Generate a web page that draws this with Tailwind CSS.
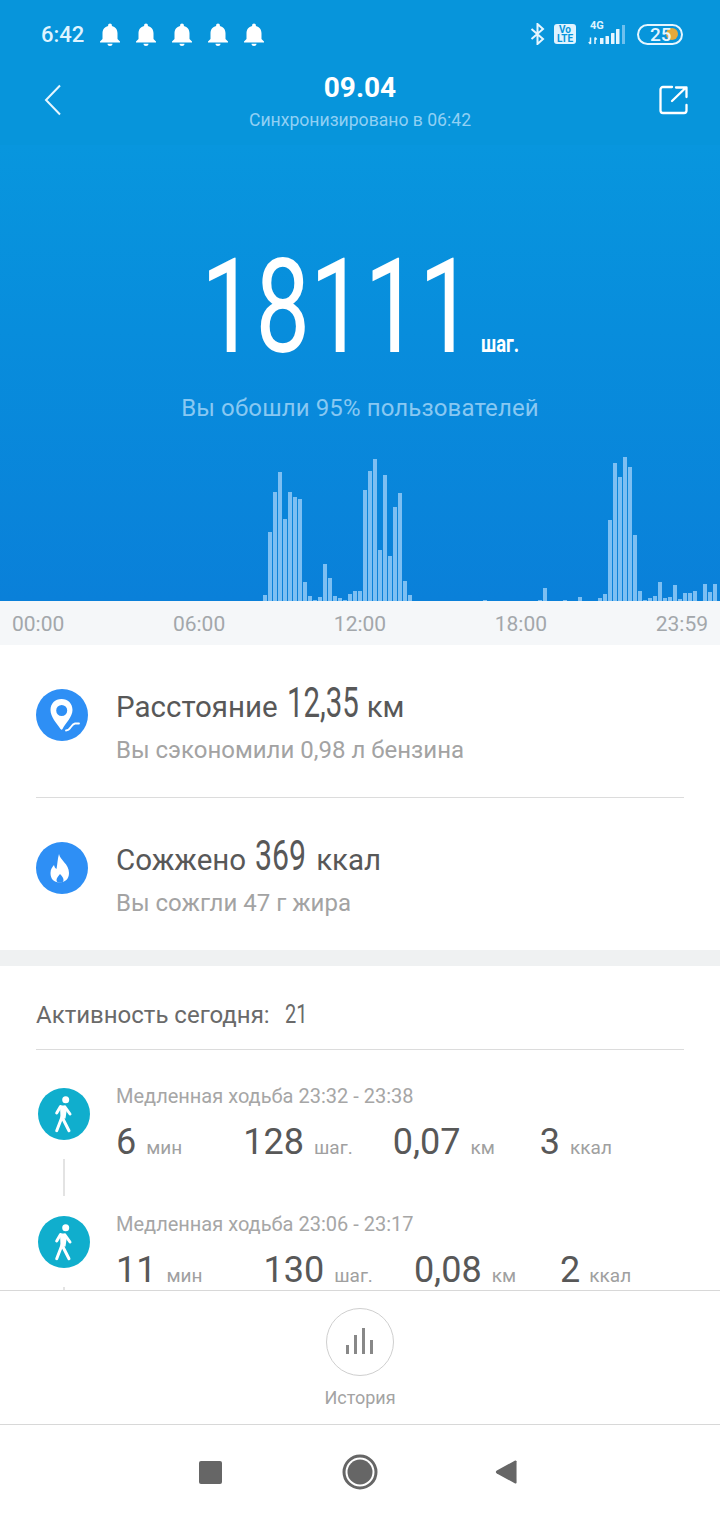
<!DOCTYPE html>
<html lang="ru">
<head>
    <meta charset="UTF-8">
    <meta name="viewport" content="width=device-width, initial-scale=1.0">
    <title>Шаги</title>
    <script src="https://cdn.jsdelivr.net/npm/@tailwindcss/browser@4"></script>
</head>
<body class="bg-white">
<div class="w-[720px] h-[1520px] flex flex-col overflow-hidden font-['Roboto',sans-serif] bg-white">

    <!-- top bar -->
    <header class="h-[145px] shrink-0 bg-[#0795db] text-white">
        <div class="h-[68px] flex items-center pl-[41px]">
            <span class="w-[59px] text-[22px] font-medium text-[#dff4ff]">6:42</span>
            <div class="flex gap-[16px]">
                <svg class="w-[20px] h-[23px]" viewBox="4 2 16 20" preserveAspectRatio="none" fill="#fff"><path d="M12 22c1.1 0 2-.9 2-2h-4c0 1.1.9 2 2 2zm6-6v-5c0-3.07-1.63-5.64-4.5-6.32V4c0-.83-.67-1.5-1.5-1.5s-1.5.67-1.5 1.5v.68C7.64 5.36 6 7.92 6 11v5l-2 2v1h16v-1l-2-2z"/></svg>
                <svg class="w-[20px] h-[23px]" viewBox="4 2 16 20" preserveAspectRatio="none" fill="#fff"><path d="M12 22c1.1 0 2-.9 2-2h-4c0 1.1.9 2 2 2zm6-6v-5c0-3.07-1.63-5.64-4.5-6.32V4c0-.83-.67-1.5-1.5-1.5s-1.5.67-1.5 1.5v.68C7.64 5.36 6 7.92 6 11v5l-2 2v1h16v-1l-2-2z"/></svg>
                <svg class="w-[20px] h-[23px]" viewBox="4 2 16 20" preserveAspectRatio="none" fill="#fff"><path d="M12 22c1.1 0 2-.9 2-2h-4c0 1.1.9 2 2 2zm6-6v-5c0-3.07-1.63-5.64-4.5-6.32V4c0-.83-.67-1.5-1.5-1.5s-1.5.67-1.5 1.5v.68C7.64 5.36 6 7.92 6 11v5l-2 2v1h16v-1l-2-2z"/></svg>
                <svg class="w-[20px] h-[23px]" viewBox="4 2 16 20" preserveAspectRatio="none" fill="#fff"><path d="M12 22c1.1 0 2-.9 2-2h-4c0 1.1.9 2 2 2zm6-6v-5c0-3.07-1.63-5.64-4.5-6.32V4c0-.83-.67-1.5-1.5-1.5s-1.5.67-1.5 1.5v.68C7.64 5.36 6 7.92 6 11v5l-2 2v1h16v-1l-2-2z"/></svg>
                <svg class="w-[20px] h-[23px]" viewBox="4 2 16 20" preserveAspectRatio="none" fill="#fff"><path d="M12 22c1.1 0 2-.9 2-2h-4c0 1.1.9 2 2 2zm6-6v-5c0-3.07-1.63-5.64-4.5-6.32V4c0-.83-.67-1.5-1.5-1.5s-1.5.67-1.5 1.5v.68C7.64 5.36 6 7.92 6 11v5l-2 2v1h16v-1l-2-2z"/></svg>
            </div>
            <div class="ml-auto flex items-center pr-[37px]">
                <svg class="w-[15px] h-[22px]" viewBox="0 0 15 22" fill="none" stroke="#e6f6ff" stroke-width="2"><path d="M1.500 6l11.500 10-5.500 5V1l5.500 5L1.500 16"/></svg>
                <div class="ml-[9px] w-[22px] h-[20px] rounded-[3px] bg-[#dff3ff] flex flex-col items-center justify-center text-[#0795db] font-bold text-[10px] leading-[9px]">
                    <span>Vo</span><span>LTE</span>
                </div>
                <div class="ml-[12px] w-[38px] h-[24px] relative">
                    <span class="absolute left-[2px] -top-[2px] text-[11px] leading-[12px] font-bold text-[#dff3ff]">4G</span>
                    <svg class="absolute left-0 top-0" width="38" height="24" viewBox="0 0 38 24" fill="#e6f6ff">
                        <path fill="none" stroke="#e6f6ff" stroke-width="1.500" d="M2.500 15.500v6.500M.8 20l1.700 2M7 22v-6.500M7 15.500l1.700 2"/>
                        <rect x="12" y="16" width="3.500" height="6"/>
                        <rect x="17.500" y="14" width="3.500" height="8" rx=".5"/>
                        <rect x="23" y="11" width="3.500" height="11" rx=".5"/>
                        <rect x="28" y="7" width="3.500" height="15" rx=".5"/>
                        <rect x="34" y="3" width="3" height="19" fill="#6fc0ee"/>
                    </svg>
                </div>
                <div class="ml-[11px] w-[46px] h-[21px] rounded-full border-2 border-[#e6f6ff] flex items-center pl-[11px] relative">
                    <span class="absolute right-[3px] top-[2.500px] w-[12px] h-[12px] rounded-full bg-[#e3a93a]"></span>
                    <span class="relative text-[19px] leading-none font-medium text-[#e6f6ff]">25</span>
                </div>
            </div>
        </div>
        <div class="relative h-[64px] flex flex-col items-center">
            <span class="text-[28px] leading-[40px] font-bold">09.04</span>
            <span class="text-[17.600px] leading-[24px] text-[#90d0f4]">Синхронизировано в 06:42</span>
            <svg class="absolute left-[44px] top-[16px]" width="18" height="32" viewBox="0 0 18 32" fill="none" stroke="#e6f6ff" stroke-width="2"><path d="M16 1.500L2 16l14 14.500"/></svg>
            <svg class="absolute right-[31px] top-[17px]" width="30" height="30" viewBox="0 0 30 30" fill="none" stroke="#fff" stroke-width="2.300" stroke-linecap="round" stroke-linejoin="round"><path d="M13 2H4a2.500 2.500 0 0 0-2.500 2.500v21A2.500 2.500 0 0 0 4 28h21a2.500 2.500 0 0 0 2.500-2.500V20"/><path d="M13 16L27 2.500M17 2.500h10.500V12"/></svg>
        </div>
    </header>

    <!-- steps + chart -->
    <section class="h-[456px] shrink-0 flex flex-col bg-gradient-to-b from-[#0896de] to-[#0a80d9] text-white">
        <div class="h-[226px] pl-[201px] flex items-end">
            <span class="block w-[263px] whitespace-nowrap origin-left scale-x-[.735] text-[132px] leading-[132px] font-normal -mb-[2px]">18111</span>
            <span class="block ml-[17px] w-[37px] whitespace-nowrap origin-left scale-x-[.8] text-[23px] leading-[24px] font-bold mb-[14px]">шаг.</span>
        </div>
        <p class="mt-[22px] text-center text-[24px] tracking-[.12px] leading-[30px] text-[#88c8f2]">Вы обошли 95% пользователей</p>
        <div id="chart" class="mt-auto h-[150px] flex items-end gap-[1px] pl-[263px]"></div>
    </section>

    <!-- time axis -->
    <div class="h-[44px] shrink-0 bg-[#f5f7f9] flex items-center justify-between px-[12px] pt-[3px] text-[21px] text-[#a3a7ab]">
        <span>00:00</span><span>06:00</span><span>12:00</span><span>18:00</span><span>23:59</span>
    </div>

    <!-- distance / calories -->
    <section class="h-[305px] shrink-0 px-[36px] flex flex-col">
        <div class="h-[153px] flex items-start gap-[28px] border-b border-[#dcdcdc]">
            <svg class="w-[52px] h-[52px] shrink-0 mt-[44px]" viewBox="0 0 52 52">
                <circle cx="26" cy="26" r="26" fill="#2e8ff5"/>
                <path fill-rule="evenodd" fill="#fff" d="M25.500 10C19 10 14.500 14.500 14.500 21c0 7 6 13 10 19 1 1 1.500 1 2 0 3-6 10-12 10-19C36.500 14.500 32 10 25.500 10zM25.700 16a5.500 5.500 0 1 1 0 11 5.500 5.500 0 0 1 0-11z"/>
                <path fill="none" stroke="#fff" stroke-width="1.800" stroke-linecap="round" d="M30 41.500c5 0 4.500-6 9-7h4"/>
            </svg>
            <div class="mt-[38px]">
                <div class="flex items-baseline text-[29.500px] leading-[40px] text-[#585858]">
                    <span>Расстояние</span>
                    <span class="block w-[72px] ml-[9px] whitespace-nowrap origin-left scale-x-[.7] text-[42px]">12,35</span>
                    <span class="ml-[8px]">км</span>
                </div>
                <p class="mt-[8px] text-[24px] leading-[30px] text-[#a3a3a3]">Вы сэкономили 0,98 л бензина</p>
            </div>
        </div>
        <div class="h-[152px] flex items-start gap-[28px]">
            <svg class="w-[52px] h-[52px] shrink-0 mt-[44px]" viewBox="0 0 52 52">
                <circle cx="26" cy="26" r="26" fill="#2e8ff5"/>
                <path fill="#fff" d="M23 12c1 6 10 10 10 19 0 6-4 9.500-9.500 9.500S14.500 37 14.500 31c0-4 2-6 3.500-8 .5 2 1 3 2.500 4 1-5 1-10 2.500-15z"/>
                <path fill="#2e8ff5" d="M24 32c2 2 3.500 4 3.500 6a3.500 2.800 0 0 1-7 0c0-2 2-4 3.500-6z"/>
            </svg>
            <div class="mt-[38px]">
                <div class="flex items-baseline text-[29.500px] leading-[40px] text-[#585858]">
                    <span>Сожжено</span>
                    <span class="block w-[52px] ml-[9px] whitespace-nowrap origin-left scale-x-[.72] text-[42px]">369</span>
                    <span class="ml-[9px]">ккал</span>
                </div>
                <p class="mt-[8px] text-[24px] leading-[30px] text-[#a3a3a3]">Вы сожгли 47 г жира</p>
            </div>
        </div>
    </section>

    <div class="h-[16px] shrink-0 bg-[#eff1f2]"></div>

    <!-- activity list -->
    <section class="flex-1 min-h-0 overflow-hidden px-[36px]">
        <div class="h-[84px] pt-[14px] flex items-center border-b border-[#dcdcdc] text-[24px] text-[#6a6a6a]">
            <span>Активность сегодня:</span>
            <span class="block ml-[15px] w-[24px] origin-left scale-x-[.8] text-[25px]">21</span>
        </div>

        <div class="h-[128px] flex gap-[24px] pt-[38px]">
            <div class="w-[56px] shrink-0 flex flex-col items-center">
                <svg class="w-[52px] h-[52px] shrink-0" viewBox="0 0 52 52">
                    <circle cx="26" cy="26" r="26" fill="#10aecd"/>
                    <circle cx="27.700" cy="11.700" r="3.500" fill="#fff"/>
                    <path fill="#fff" d="M22 17.500h5.500l1 6-1 7h-5z"/>
                    <path fill="none" stroke="#fff" stroke-width="3" stroke-linecap="round" stroke-linejoin="round" d="M24 29l-5.300 13.700M24.500 30L31 42.700M27 19L32 26M22.500 18.500L18.700 25"/>
                </svg>
                <div class="mt-[19px] w-[2px] h-[37px] shrink-0 bg-[#e3e3e3]"></div>
            </div>
            <div class="-mt-[4px]">
                <p class="text-[20px] leading-[24px] text-[#a6a6a6]">Медленная ходьба 23:32 - 23:38</p>
                <div class="mt-[13px] flex items-baseline text-[#585858]">
                    <div class="mr-[61px]"><span class="text-[36px] leading-[42px]">6</span><span class="ml-[10px] text-[19px] text-[#a0a0a0]">мин</span></div>
                    <div class="mr-[40px]"><span class="text-[36px] leading-[42px]">128</span><span class="ml-[10px] text-[19px] text-[#a0a0a0]">шаг.</span></div>
                    <div class="mr-[45px]"><span class="text-[36px] leading-[42px]">0,07</span><span class="ml-[10px] text-[19px] text-[#a0a0a0]">км</span></div>
                    <div><span class="text-[36px] leading-[42px]">3</span><span class="ml-[10px] text-[19px] text-[#a0a0a0]">ккал</span></div>
                </div>
            </div>
        </div>

        <div class="h-[128px] flex gap-[24px] pt-[38px]">
            <div class="w-[56px] shrink-0 flex flex-col items-center">
                <svg class="w-[52px] h-[52px] shrink-0" viewBox="0 0 52 52">
                    <circle cx="26" cy="26" r="26" fill="#10aecd"/>
                    <circle cx="27.700" cy="11.700" r="3.500" fill="#fff"/>
                    <path fill="#fff" d="M22 17.500h5.500l1 6-1 7h-5z"/>
                    <path fill="none" stroke="#fff" stroke-width="3" stroke-linecap="round" stroke-linejoin="round" d="M24 29l-5.300 13.700M24.500 30L31 42.700M27 19L32 26M22.500 18.500L18.700 25"/>
                </svg>
                <div class="mt-[19px] w-[2px] h-[37px] shrink-0 bg-[#e3e3e3]"></div>
            </div>
            <div class="-mt-[4px]">
                <p class="text-[20px] leading-[24px] text-[#a6a6a6]">Медленная ходьба 23:06 - 23:17</p>
                <div class="mt-[13px] flex items-baseline text-[#585858]">
                    <div class="mr-[61px]"><span class="text-[36px] leading-[42px]">11</span><span class="ml-[10px] text-[19px] text-[#a0a0a0]">мин</span></div>
                    <div class="mr-[41px]"><span class="text-[36px] leading-[42px]">130</span><span class="ml-[10px] text-[19px] text-[#a0a0a0]">шаг.</span></div>
                    <div class="mr-[44px]"><span class="text-[36px] leading-[42px]">0,08</span><span class="ml-[10px] text-[19px] text-[#a0a0a0]">км</span></div>
                    <div><span class="text-[36px] leading-[42px]">2</span><span class="ml-[9px] text-[19px] text-[#a0a0a0]">ккал</span></div>
                </div>
            </div>
        </div>
    </section>

    <!-- history button -->
    <div class="h-[135px] shrink-0 border-y border-[#d8d8d8] flex flex-col items-center pt-[17px] bg-white">
        <div class="w-[68px] h-[68px] rounded-full border border-[#cfcfcf] flex items-center justify-center">
            <svg width="30" height="28" viewBox="0 0 30 28" fill="#888"><rect x="1" y="17" width="3" height="9"/><rect x="9" y="7" width="3" height="19"/><rect x="17" y="0" width="3" height="26"/><rect x="25" y="12" width="3" height="14"/></svg>
        </div>
        <span class="mt-[9px] text-[18px] leading-[26px] text-[#a3a3a3]">История</span>
    </div>

    <!-- android nav -->
    <nav class="h-[95px] shrink-0 flex items-center pl-[199px] pb-[1px]">
        <div class="w-[23px] h-[23px] rounded-[2px] bg-[#666]"></div>
        <svg class="ml-[120px]" width="36" height="36" viewBox="0 0 36 36"><circle cx="18" cy="18" r="16" fill="none" stroke="#666" stroke-width="3"/><circle cx="18" cy="18" r="12.500" fill="#666"/></svg>
        <svg class="ml-[117px]" width="22" height="26" viewBox="0 0 24 28" preserveAspectRatio="none" fill="#666"><path d="M22 1.500a1.500 1.500 0 0 1 1.500 1v23a1.500 1.500 0 0 1-1.500 1L2 15.500c-1.500-1-1.500-2 0-3z"/></svg>
    </nav>
</div>

<script>
    // one bar per 5px, starting at x=263
    const steps = [6,69,109,129,82,109,104,102,19,5,1,4,37,23,5,3,1,7,10,10,111,130,142,51,126,45,94,108,20,6,
        0,0,0,0,0,0,0,0,0,0,0,0,0,0,1,
        0,0,0,0,0,0,0,0,0,0,1,13,
        0,0,0,1,0,0,4,0,0,0,
        3,7,81,138,124,144,134,66,10,1,3,5,19,3,4,16,2,8,8,10,0,17,9,17];
    const chart = document.getElementById("chart");
    steps.forEach(function(h) {
        const bar = document.createElement("div");
        bar.className = "w-[4px] shrink-0 bg-[#7dbff2]";
        bar.style.height = h + "px";
        chart.appendChild(bar);
    });
</script>
</body>
</html>
